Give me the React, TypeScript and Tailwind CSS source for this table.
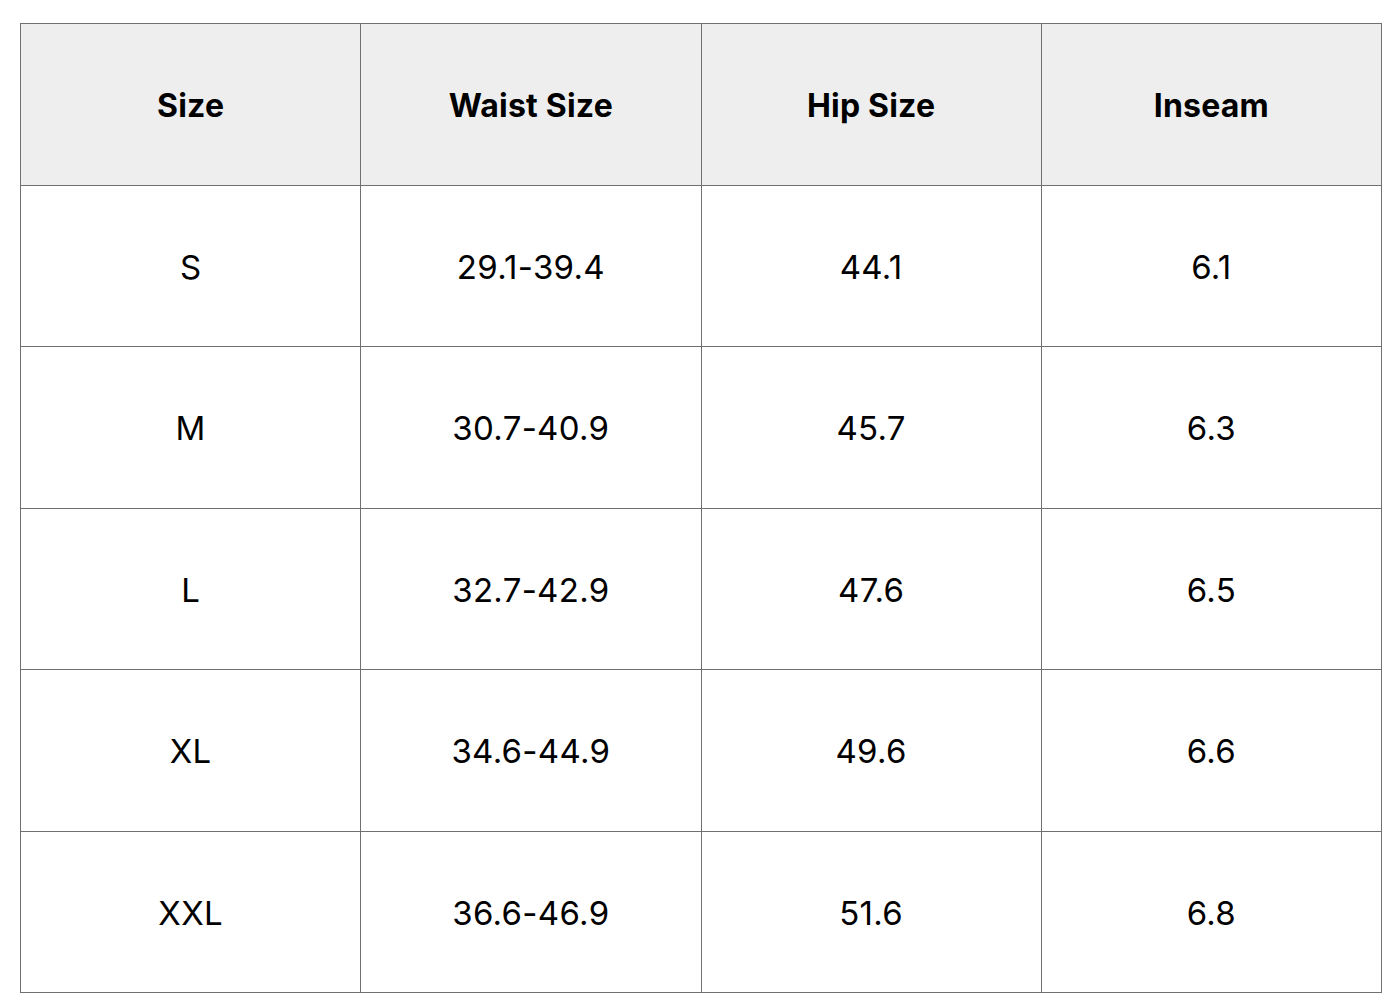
import React from "react";

const headers = ["Size", "Waist Size", "Hip Size", "Inseam"];

const rows: string[][] = [
  ["S", "29.1-39.4", "44.1", "6.1"],
  ["M", "30.7-40.9", "45.7", "6.3"],
  ["L", "32.7-42.9", "47.6", "6.5"],
  ["XL", "34.6-44.9", "49.6", "6.6"],
  ["XXL", "36.6-46.9", "51.6", "6.8"],
];

const App: React.FC = () => {
  return (
    <div className="w-[1400px] h-[1000px] bg-white pt-[23px] pl-[20px] font-['Inter',sans-serif] text-black">
      <div className="grid grid-cols-4 grid-rows-6 gap-px bg-[#707070] p-px w-[1362px] h-[970px]">
        {headers.map((h) => (
          <div key={h} className="flex items-center justify-center pt-[3px] bg-[#eeeeee] text-[32px] font-bold tracking-[0.2px]">
            {h}
          </div>
        ))}
        {rows.map((r) =>
          r.map((cell, i) => (
            <div key={r[0] + i} className="flex items-center justify-center pt-[3px] bg-white text-[33px] tracking-[0.3px]">
              {cell}
            </div>
          ))
        )}
      </div>
    </div>
  );
};

export default App;
